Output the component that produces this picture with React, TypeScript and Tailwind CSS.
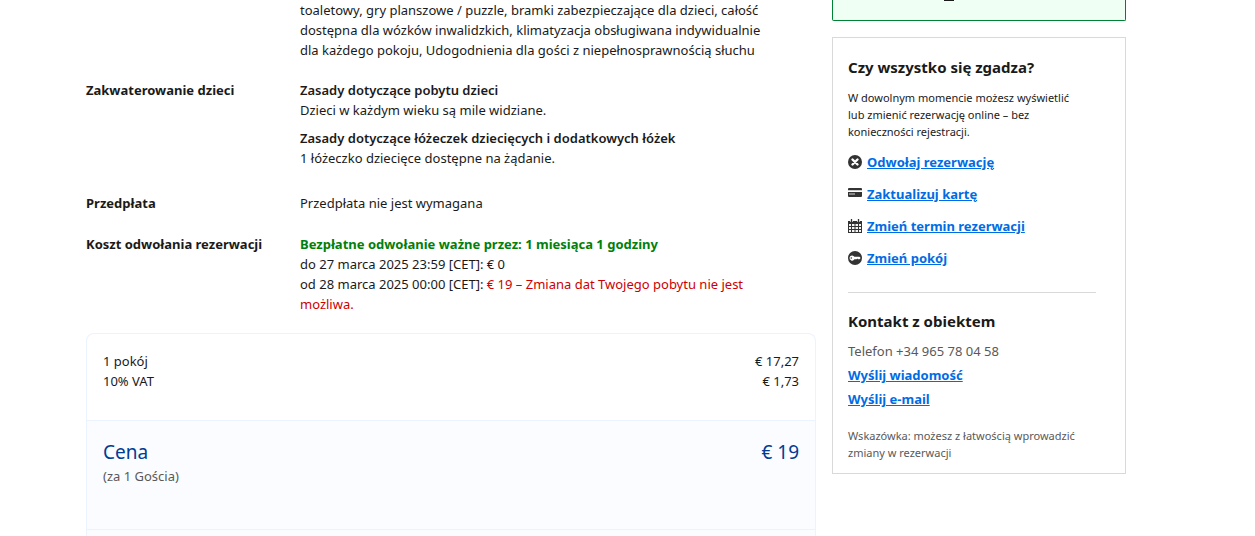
import React from "react";

const linkClass = "text-[13px] leading-5 font-bold text-[#006ce4] underline";

function CancelIcon() {
  return (
    <svg viewBox="0 0 14 14" className="size-3.5 shrink-0" aria-hidden="true">
      <circle cx="7" cy="7" r="7" fill="#333" />
      <path d="M4.5 4.5 9.5 9.5M9.5 4.5 4.5 9.5" stroke="#fff" strokeWidth="2.4" strokeLinecap="round" />
    </svg>
  );
}

function CardIcon() {
  return (
    <svg viewBox="0 0 14 14" className="size-3.5 shrink-0" aria-hidden="true">
      <path d="M1 1h12a1 1 0 0 1 1 1v1H0V2a1 1 0 0 1 1-1zM0 5h14v4a1 1 0 0 1-1 1H1a1 1 0 0 1-1-1z" fill="#333" />
      <path d="M0 3h14v1H0z" fill="#ccc" />
      <path d="M1 7h6" stroke="#999" strokeWidth="1.6" />
    </svg>
  );
}

function CalendarIcon() {
  return (
    <svg viewBox="0 0 14 14" className="size-3.5 shrink-0" aria-hidden="true">
      <path d="M0 2h14v12H0z" fill="#333" />
      <path d="M3.5 0v3M10.5 0v3" stroke="#fff" strokeWidth="2.6" />
      <path d="M3.5 0v3M10.5 0v3" stroke="#333" strokeWidth="1.3" />
      <path
        d="M1 5h2v2H1zM4 5h2.5v2H4zM7.5 5H10v2H7.5zM11 5h2v2h-2zM1 8h2v2H1zM4 8h2.5v2H4zM7.5 8H10v2H7.5zM11 8h2v2h-2zM1 11h2v2H1zM4 11h2.5v2H4zM7.5 11H10v2H7.5zM11 11h2v2h-2z"
        fill="#f4f4f4"
      />
    </svg>
  );
}

function KeyIcon() {
  return (
    <svg viewBox="0 0 14 14" className="size-3.5 shrink-0" aria-hidden="true">
      <circle cx="7" cy="7" r="7" fill="#333" />
      <path d="M4.2 4.4a2.6 2.6 0 0 1 2.2 1.4h5.1l1.2 1.2-1.2 1.2H10l-.7-.6-.7.6H6.4a2.6 2.6 0 1 1-2.2-3.8z" fill="#fff" />
      <circle cx="3.3" cy="7" r=".8" fill="#333" />
    </svg>
  );
}

const actions = [
  { label: "Odwołaj rezerwację", Icon: CancelIcon },
  { label: "Zaktualizuj kartę", Icon: CardIcon },
  { label: "Zmień termin rezerwacji", Icon: CalendarIcon },
  { label: "Zmień pokój", Icon: KeyIcon },
];

function Row({ label, children }: { label?: string; children: React.ReactNode }) {
  return (
    <div className="flex">
      <dt className="w-[214px] shrink-0 font-bold">{label}</dt>
      <dd className="min-w-0 flex-1">{children}</dd>
    </div>
  );
}

export default function App() {
  return (
    <div className="flex items-start gap-4 bg-white pr-[129px] pl-[86px] font-['Noto_Sans','Open_Sans',sans-serif] text-[13px] leading-5 text-[#1a1a1a]">
      <main className="min-w-0 flex-1">
        <dl>
          <Row>
            toaletowy, gry planszowe / puzzle, bramki zabezpieczające dla dzieci, całość
            <br />
            dostępna dla wózków inwalidzkich, klimatyzacja obsługiwana indywidualnie
            <br />
            dla każdego pokoju, Udogodnienia dla gości z niepełnosprawnością słuchu
          </Row>
          <div className="mt-5">
            <Row label="Zakwaterowanie dzieci">
              <h3 className="font-semibold">Zasady dotyczące pobytu dzieci</h3>
              <p>Dzieci w każdym wieku są mile widziane.</p>
              <h3 className="mt-2 font-semibold">Zasady dotyczące łóżeczek dziecięcych i dodatkowych łóżek</h3>
              <p>1 łóżeczko dziecięce dostępne na żądanie.</p>
            </Row>
          </div>
          <div className="mt-[25px]">
            <Row label="Przedpłata">Przedpłata nie jest wymagana</Row>
          </div>
          <div className="mt-[21px]">
            <Row label="Koszt odwołania rezerwacji">
              <p className="font-bold text-[#008009]">Bezpłatne odwołanie ważne przez: 1 miesiąca 1 godziny</p>
              <p>do 27 marca 2025 23:59 [CET]: € 0</p>
              <p>
                od 28 marca 2025 00:00 [CET]:{" "}
                <span className="text-[#cc0000]">
                  € 19 – Zmiana dat Twojego pobytu nie jest
                  <br />
                  możliwa.
                </span>
              </p>
            </Row>
          </div>
        </dl>

        <section className="mt-[19px] rounded-t-lg border border-b-0 border-[#ebf3ff]">
          <table className="w-full">
            <tbody>
              <tr>
                <th scope="row" className="pt-[17px] pl-4 text-left font-normal">1 pokój</th>
                <td className="pt-[17px] pr-4 text-right">€ 17,27</td>
              </tr>
              <tr>
                <th scope="row" className="pb-[29px] pl-4 text-left font-normal">10% VAT</th>
                <td className="pr-4 pb-[29px] text-right">€ 1,73</td>
              </tr>
              <tr className="border-y border-[#ebf3ff] bg-[#fafcff] align-top">
                <th scope="row" className="pt-[18px] pb-[43px] pl-4 text-left font-normal">
                  <span className="block text-[19px] leading-[27px] text-[#003b95]">Cena</span>
                  <span className="block text-[#595959]">(za 1 Gościa)</span>
                </th>
                <td className="pt-[18px] pr-4 text-right text-[19px] leading-[27px] text-[#003b95]">€ 19</td>
              </tr>
            </tbody>
          </table>
          <div className="h-1.5 bg-[#fafcff]" />
        </section>
      </main>

      <aside className="w-[294px] shrink-0">
        <div className="flex h-[21px] items-start rounded-b-xs border border-t-0 border-[#008234] bg-[#f0fff4] pl-[111px]">
          <svg viewBox="0 0 10 1" className="h-px w-2.5" aria-hidden="true">
            <path d="M0 0h10v1H0z" fill="#1a1a1a" />
          </svg>
        </div>

        <div className="mt-4 border border-[#d9d9d9] pt-[17px] pr-[29px] pb-3 pl-[15px]">
          <h2 className="text-[15px] leading-6 font-bold">Czy wszystko się zgadza?</h2>
          <p className="mt-2.5 text-[11px] leading-[17px]">
            W dowolnym momencie możesz wyświetlić
            <br />
            lub zmienić rezerwację online – bez
            <br />
            konieczności rejestracji.
          </p>
          <ul className="mt-3 flex flex-col gap-3">
            {actions.map(({ label, Icon }) => (
              <li key={label} className="flex items-center gap-[5px]">
                <Icon />
                <a href="#" className={linkClass}>{label}</a>
              </li>
            ))}
          </ul>
          <hr className="mt-6 border-[#d9d9d9]" />
          <h2 className="mt-4 text-[15px] leading-6 font-bold">Kontakt z obiektem</h2>
          <p className="mt-2 text-[#595959]">Telefon +34 965 78 04 58</p>
          <div className="mt-1 flex flex-col items-start gap-1">
            <a href="#" className={linkClass}>Wyślij wiadomość</a>
            <a href="#" className={linkClass}>Wyślij e-mail</a>
          </div>
          <p className="mt-[18px] text-[11px] leading-[17px] text-[#595959]">
            Wskazówka: możesz z łatwością wprowadzić
            <br />
            zmiany w rezerwacji
          </p>
        </div>
      </aside>
    </div>
  );
}
